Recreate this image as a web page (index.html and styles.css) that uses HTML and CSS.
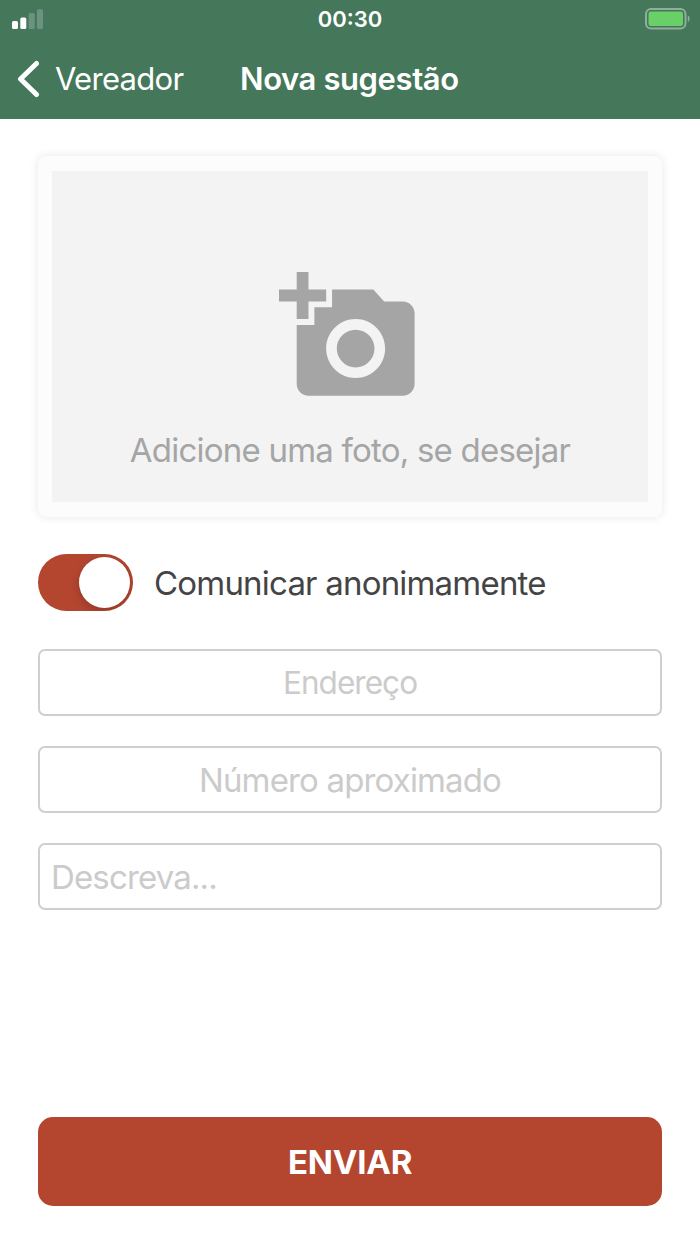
FILE: index.html
```
<!DOCTYPE html>
<html lang="pt-br">

<head>
	<meta charset="utf-8">
	<title>Nova sugestão</title>
	<link rel="stylesheet" href="styles.css">
</head>

<body>

	<header>
		<div class="status">
			<svg class="signal" width="32" height="20" viewBox="0 0 32 20">
				<rect x="0" y="12" width="6" height="8" rx="1.5"/>
				<rect x="8.3" y="8.5" width="6" height="11.5" rx="1.5"/>
				<rect class="off" x="16.7" y="4" width="6" height="16" rx="1.5"/>
				<rect class="off" x="25" y="0.3" width="6" height="19.7" rx="1.5"/>
			</svg>
			<span class="time">00:30</span>
			<svg class="battery" width="46" height="22" viewBox="0 0 46 22">
				<rect class="case" x="1" y="1" width="39.5" height="19.5" rx="5"/>
				<rect class="level" x="3.5" y="3.5" width="34.5" height="14.5" rx="2.5"/>
				<path class="tip" d="M42.8 7.5c2.4 1 2.4 5.5 0 6.5z"/>
			</svg>
		</div>
		<nav>
			<a class="back" href="#">
				<svg width="24" height="38" viewBox="0 0 24 38">
					<path d="M20.5 3.500L4.500 19l16 15.500"/>
				</svg>
				<span>Vereador</span>
			</a>
			<h1>Nova sugestão</h1>
		</nav>
	</header>

	<form>
		<div class="photo">
			<div class="photo-area">
				<svg width="141.5" height="141.5" viewBox="0 0 24 24">
					<path d="M3 4V1h2v3h3v2H5v3H3V6H0V4h3zm3 6V7h3V4h7l1.83 2H21c1.1 0 2 .9 2 2v12c0 1.1-.9 2-2 2H5c-1.1 0-2-.9-2-2V10h3zm7 9c2.76 0 5-2.24 5-5s-2.24-5-5-5-5 2.24-5 5 2.24 5 5 5zm-3.2-5c0 1.77 1.43 3.2 3.2 3.2s3.2-1.43 3.2-3.2-1.43-3.2-3.2-3.2-3.2 1.43-3.2 3.2z"/>
				</svg>
				<p>Adicione uma foto, se desejar</p>
			</div>
		</div>

		<label class="anonymous">
			<span class="switch"><span class="knob"></span></span>
			<span class="anonymous-text">Comunicar anonimamente</span>
		</label>

		<input class="field center address" type="text" name="endereco" placeholder="Endereço">
		<input class="field center" type="text" name="numero" placeholder="Número aproximado">
		<input class="field" type="text" name="descricao" placeholder="Descreva...">

		<button class="send" type="button">ENVIAR</button>
	</form>

</body>

</html>
```

FILE: styles.css
```
* {
	box-sizing: border-box;
}

body {
	margin: 0;
	height: 1244px;
	display: flex;
	flex-direction: column;
	background-color: #fff;
	font-family: Inter, "Liberation Sans", sans-serif;
	color: #444;
}

header {
	height: 119px;
	background-color: #45775a;
	color: #fff;
}

.status {
	height: 38px;
	padding: 0 9px 0 12px;
	display: grid;
	grid-template-columns: 1fr auto 1fr;
	align-items: center;
}

.signal {
	fill: #fff;
}

.signal .off {
	fill: #6b9380;
}

.time {
	margin-right: 3px;
	font-size: 22px;
	font-weight: 600;
}

.battery {
	justify-self: end;
}

.battery .case {
	fill: none;
	stroke: #8fae9c;
	stroke-width: 2;
}

.battery .level {
	fill: #68d067;
}

.battery .tip {
	fill: #8fae9c;
}

nav {
	height: 81px;
	padding-left: 16px;
	display: flex;
	align-items: center;
}

.back {
	width: 224px;
	display: flex;
	align-items: center;
	gap: 15px;
	color: #fff;
	font-size: 31px;
	letter-spacing: -0.7px;
	text-decoration: none;
}

.back path {
	fill: none;
	stroke: #fff;
	stroke-width: 5;
	stroke-linecap: round;
	stroke-linejoin: round;
}

h1 {
	margin: 0;
	font-size: 31px;
	font-weight: 600;
	letter-spacing: -0.4px;
}

form {
	flex: 1;
	padding: 37px 38px 38px;
	display: flex;
	flex-direction: column;
}

.photo {
	height: 361px;
	padding: 15px 14px;
	border-radius: 8px;
	background-color: #fcfcfc;
	box-shadow: 0 0 10px rgba(0, 0, 0, 0.1);
}

.photo-area {
	height: 331px;
	padding-top: 95px;
	display: flex;
	flex-direction: column;
	align-items: center;
	background-color: #f3f3f3;
}

.photo-area svg {
	fill: #a5a5a5;
}

.photo-area p {
	margin: 22px 0 0;
	font-size: 33px;
	line-height: 40px;
	letter-spacing: -0.78px;
	color: #a5a5a5;
	white-space: nowrap;
}

.anonymous {
	margin: 37px 0 38px;
	display: flex;
	align-items: center;
	gap: 21px;
	font-size: 33px;
	line-height: 40px;
	letter-spacing: -0.8px;
}

.switch {
	width: 95px;
	height: 57px;
	padding: 3px;
	display: flex;
	justify-content: flex-end;
	border-radius: 29px;
	background-color: #b44630;
	overflow: hidden;
}

.knob {
	width: 51px;
	height: 51px;
	border-radius: 50%;
	background-color: #fff;
	box-shadow: 0 3px 10px rgba(0, 0, 0, 0.2);
}

.field {
	width: 100%;
	height: 67px;
	margin-bottom: 30px;
	padding: 0 11px;
	border: 2px solid #cfcfcf;
	border-radius: 7px;
	background-color: #fff;
	font-family: inherit;
	font-size: 33px;
	letter-spacing: -0.85px;
}

.field::placeholder {
	color: #cbcbcb;
	opacity: 1;
}

.center {
	text-align: center;
}

.address {
	font-size: 31.5px;
	letter-spacing: -0.95px;
}

.send {
	height: 89px;
	margin-top: auto;
	border: 0;
	border-radius: 15px;
	background-color: #b44630;
	color: #fff;
	font-family: inherit;
	font-size: 33px;
	font-weight: 700;
	letter-spacing: -0.2px;
}
```
